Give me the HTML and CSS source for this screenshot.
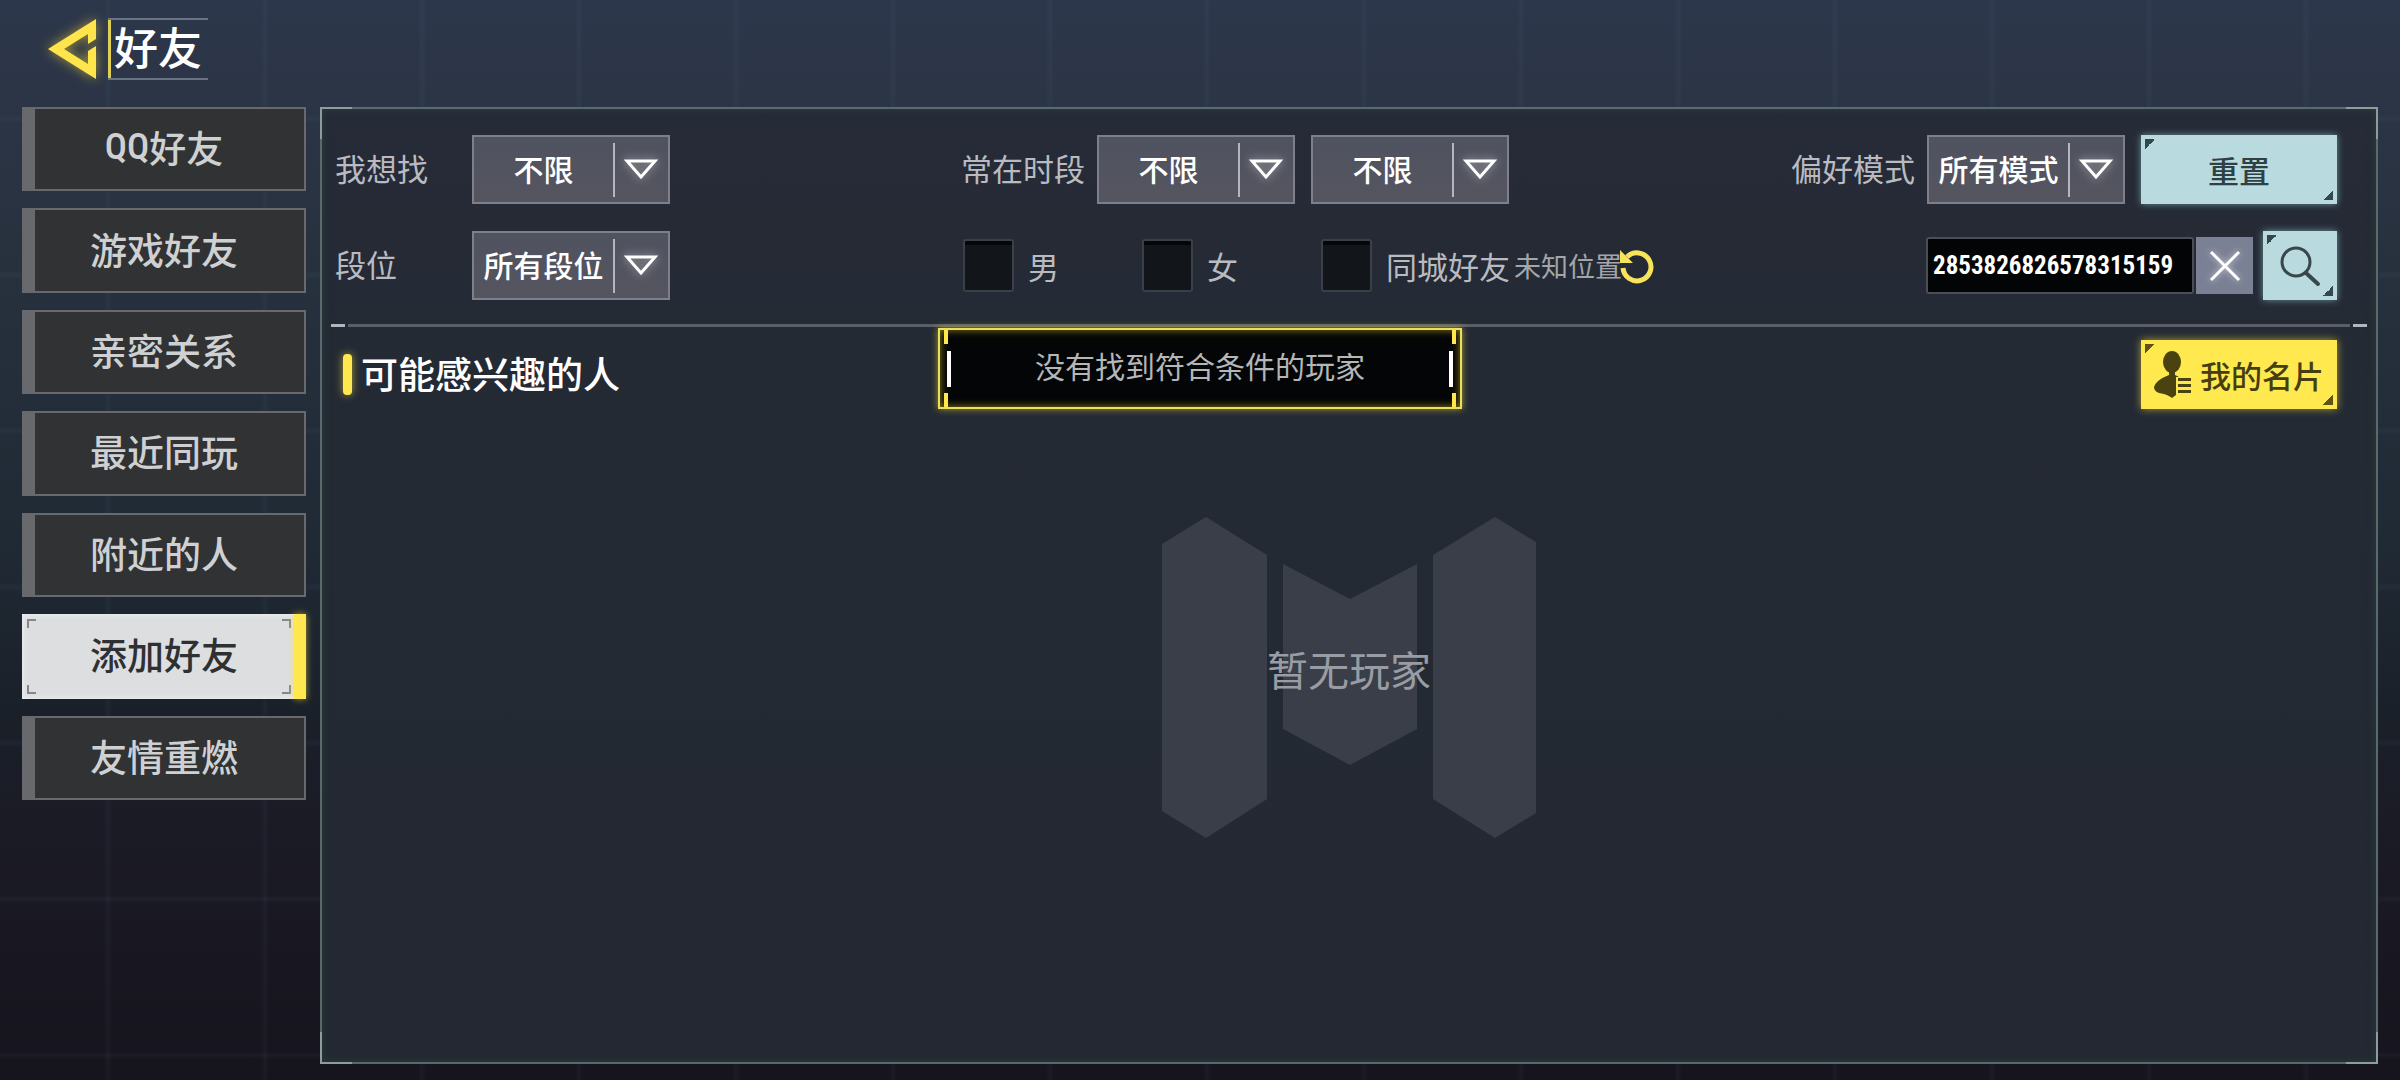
FILE: index.html
```html
<!DOCTYPE html>
<html lang="zh-CN">
<head>
    <meta charset="utf-8">
    <meta name="viewport" content="width=device-width, initial-scale=1">
    <title>好友</title>
    <link rel="stylesheet" href="styles.css">
</head>
<body>
    <header class="header">
        <button type="button" class="back" aria-label="返回">
            <svg width="50" height="62" viewBox="0 0 50 62">
                <path fill="#ffe44c" d="M0 31L48 1V21L40 26V16L16 31L40 46V33L48 28V61Z"/>
            </svg>
        </button>
        <h1>好友</h1>
    </header>

    <div class="layout">
        <nav class="sidebar">
            <a href="#qq"><span class="latin">QQ</span>好友</a>
            <a href="#game">游戏好友</a>
            <a href="#close">亲密关系</a>
            <a href="#recent">最近同玩</a>
            <a href="#nearby">附近的人</a>
            <a href="#add" class="active" aria-current="page"><i class="corners"></i>添加好友</a>
            <a href="#rekindle">友情重燃</a>
        </nav>

        <main class="panel">
            <form class="filters">
                <div class="field">
                    <label for="want" class="wide">我想找</label>
                    <div class="select">
                        <select id="want"><option>不限</option></select>
                        <svg width="36" height="24" viewBox="0 0 36 24"><path d="M4 3H32L18 19Z"/></svg>
                    </div>
                </div>
                <div class="field">
                    <label for="timeFrom">常在时段</label>
                    <div class="select">
                        <select id="timeFrom"><option>不限</option></select>
                        <svg width="36" height="24" viewBox="0 0 36 24"><path d="M4 3H32L18 19Z"/></svg>
                    </div>
                    <div class="select">
                        <select id="timeTo" aria-label="常在时段结束"><option>不限</option></select>
                        <svg width="36" height="24" viewBox="0 0 36 24"><path d="M4 3H32L18 19Z"/></svg>
                    </div>
                </div>
                <div class="field">
                    <label for="mode">偏好模式</label>
                    <div class="select">
                        <select id="mode"><option>所有模式</option></select>
                        <svg width="36" height="24" viewBox="0 0 36 24"><path d="M4 3H32L18 19Z"/></svg>
                    </div>
                    <button type="reset" class="btn">重置</button>
                </div>

                <div class="field">
                    <label for="rank" class="wide">段位</label>
                    <div class="select">
                        <select id="rank"><option>所有段位</option></select>
                        <svg width="36" height="24" viewBox="0 0 36 24"><path d="M4 3H32L18 19Z"/></svg>
                    </div>
                </div>
                <div class="checks">
                    <label><input type="checkbox" name="male">男</label>
                    <label><input type="checkbox" name="female">女</label>
                    <div class="city">
                        <label><input type="checkbox" name="city">同城好友</label>
                        <span class="place">未知位置</span>
                        <button type="button" class="refresh" aria-label="刷新位置">
                            <svg width="36" height="36" viewBox="0 0 36 36">
                                <path d="M7 9A14 14 0 1 1 3 20" fill="none" stroke="#f7e45a" stroke-width="5"/>
                                <path d="M0 2V15H13Z" fill="#f7e45a"/>
                            </svg>
                        </button>
                    </div>
                </div>
                <div class="search">
                    <input type="text" value="2853826826578315159" aria-label="玩家编号">
                    <button type="button" class="clear" aria-label="清除">
                        <svg width="32" height="32" viewBox="0 0 32 32"><path d="M2 2L30 30M30 2L2 30" stroke="#fff" stroke-width="3"/></svg>
                    </button>
                    <button type="submit" class="btn find" aria-label="搜索">
                        <svg width="42" height="42" viewBox="0 0 42 42" fill="none" stroke="#37474b" stroke-linecap="round">
                            <circle cx="17" cy="17" r="14" stroke-width="3"/>
                            <path d="M27 28L39 39" stroke-width="4"/>
                        </svg>
                    </button>
                </div>
            </form>

            <hr class="divider">

            <div class="section">
                <h2>可能感兴趣的人</h2>
                <button type="button" class="btn card">
                    <svg width="38" height="48" viewBox="0 0 38 48" fill="#4a4310">
                        <ellipse cx="18" cy="11" rx="9" ry="11"/>
                        <path d="M15 20H21V24L25 26H22V44L18 47Q13 43 5 42Q0 40 0 36Q2 29 15 24Z"/>
                        <path d="M24 27H37V30H24ZM24 33H37V36H24ZM24 39H37V42H24Z"/>
                    </svg>
                    我的名片
                </button>
            </div>

            <div class="empty">
                <svg width="374" height="321" viewBox="0 0 374 321" fill="#3a3e49">
                    <path d="M0 27L44 0L105 38V282L44 321L0 294Z"/>
                    <path d="M121 47L188 82L255 47V212L188 248L121 212Z"/>
                    <path d="M271 38L333 0L374 25V296L333 321L271 282Z"/>
                </svg>
                <p>暂无玩家</p>
            </div>
        </main>
    </div>

    <div class="toast" role="status">没有找到符合条件的玩家</div>
</body>
</html>
```

FILE: styles.css
```css
* {
    box-sizing: border-box;
}

body {
    margin: 0;
    min-height: 100vh;
    display: flex;
    flex-direction: column;
    position: relative;
    padding: 18px 22px 16px;
    font-family: "Noto Sans CJK SC", sans-serif;
    font-size: 31px;
    line-height: 40px;
    color: #b9bbc1;
    background:
        repeating-linear-gradient(90deg, transparent 0 104px, rgba(90, 120, 150, 0.08) 108px, transparent 112px 157px),
        repeating-linear-gradient(180deg, transparent 0 115px, rgba(90, 120, 150, 0.08) 119px, transparent 123px 156px),
        linear-gradient(180deg, #2d374b 0%, #28323f 22%, #202a35 50%, #1a2029 66%, #1b1b26 76%, #16141d 100%);
}

button, input, select {
    font: inherit;
    color: inherit;
    margin: 0;
    padding: 0;
    border: none;
    border-radius: 0;
    background: none;
}

button {
    cursor: pointer;
}

svg {
    display: block;
    flex: none;
}

/* Title bar */
.header {
    display: flex;
    gap: 10px;
    height: 62px;
    padding-left: 26px;
    margin-bottom: 27px;
}

.back svg {
    filter: drop-shadow(0 0 6px rgba(255, 220, 50, 0.6));
}

.header h1 {
    margin: 0;
    padding: 0 6px 0 6px;
    border: solid rgba(180, 190, 205, 0.45);
    border-width: 2px 0;
    box-shadow: inset 3px 0 #e0cf52;
    font-size: 44px;
    font-weight: 500;
    line-height: 52px;
    color: #fff;
}

.layout {
    flex: 1;
    display: flex;
    align-items: flex-start;
    gap: 14px;
}

/* Side menu */
.sidebar {
    display: grid;
    grid-auto-rows: 1fr;
    gap: 17px;
    width: 284px;
    height: 693px;
}

.sidebar a {
    position: relative;
    display: flex;
    align-items: center;
    justify-content: center;
    padding-bottom: 4px;
    font-size: 37px;
    font-weight: 500;
    color: #cfd0d2;
    text-decoration: none;
    background: linear-gradient(90deg, #67696c 11px, #303234 11px);
    border: 2px solid #67696c;
}

.sidebar .latin {
    font-family: "Liberation Sans Narrow", "Roboto Condensed", "Noto Sans CJK SC", sans-serif;
}

.sidebar .active {
    color: #2f3032;
    background: linear-gradient(270deg, #ffe84f 12px, #dddee0 12px);
    border: none;
    box-shadow: inset 0 0 6px #f2f5f6;
}

.sidebar .active::after {
    content: "";
    position: absolute;
    inset: 0 0 0 auto;
    width: 12px;
    background: #ffe84f;
    box-shadow: 0 0 7px rgba(255, 230, 70, 0.6);
}

.corners {
    position: absolute;
    inset: 5px 15px 5px 5px;
    --c: #85878a;
    background:
        linear-gradient(var(--c), var(--c)) 0 0 / 9px 2px,
        linear-gradient(var(--c), var(--c)) 0 0 / 2px 9px,
        linear-gradient(var(--c), var(--c)) 100% 0 / 9px 2px,
        linear-gradient(var(--c), var(--c)) 100% 0 / 2px 9px,
        linear-gradient(var(--c), var(--c)) 0 100% / 9px 2px,
        linear-gradient(var(--c), var(--c)) 0 100% / 2px 9px,
        linear-gradient(var(--c), var(--c)) 100% 100% / 9px 2px,
        linear-gradient(var(--c), var(--c)) 100% 100% / 2px 9px;
    background-repeat: no-repeat;
}

/* Main panel */
.panel {
    flex: 1;
    align-self: stretch;
    display: flex;
    flex-direction: column;
    --b: #b4bcc0;
    background:
        linear-gradient(var(--b), var(--b)) 0 0 / 32px 2px,
        linear-gradient(var(--b), var(--b)) 0 0 / 2px 32px,
        linear-gradient(var(--b), var(--b)) 100% 0 / 32px 2px,
        linear-gradient(var(--b), var(--b)) 100% 0 / 2px 32px,
        linear-gradient(var(--b), var(--b)) 0 100% / 32px 2px,
        linear-gradient(var(--b), var(--b)) 0 100% / 2px 32px,
        linear-gradient(var(--b), var(--b)) 100% 100% / 32px 2px,
        linear-gradient(var(--b), var(--b)) 100% 100% / 2px 32px,
        linear-gradient(#262b37, #242a34 30%, #232832);
    background-repeat: no-repeat;
    background-origin: border-box;
    border: 2px solid rgba(120, 140, 140, 0.65);
    box-shadow: inset 0 0 8px rgba(50, 90, 70, 0.4);
}

.filters {
    display: grid;
    grid-template-columns: 43fr 57fr auto;
    row-gap: 27px;
    padding: 26px 39px 24px 13px;
}

.field {
    display: flex;
    align-items: center;
    gap: 16px;
}

.field label {
    padding-bottom: 4px;
    white-space: nowrap;
}

.field label:not(.wide) {
    margin-right: -4px;
}

.field .wide {
    width: 121px;
}

.select {
    display: flex;
    align-items: center;
    position: relative;
    width: 198px;
    height: 69px;
    background: linear-gradient(#b4b6bd, #b4b6bd) 139px 50% / 2px 54px no-repeat, linear-gradient(#4f535f, #55555f);
    border: 2px solid #7d7f8a;
}

.select select {
    appearance: none;
    width: 100%;
    height: 100%;
    padding: 0 55px 4px 0;
    font-size: 30px;
    font-weight: 500;
    text-align: center;
    text-align-last: center;
    color: #fff;
    outline: none;
}

.select svg {
    position: absolute;
    right: 9px;
    fill: none;
    stroke: #fff;
    stroke-width: 3;
    filter: drop-shadow(0 0 5px rgba(255, 255, 255, 0.5));
    pointer-events: none;
}

.btn {
    --t: #33484b;
    display: flex;
    align-items: center;
    justify-content: center;
    width: 196px;
    height: 69px;
    font-weight: 500;
    color: #2f4044;
    background:
        linear-gradient(135deg, var(--t) 50%, transparent 50%) 4px 4px / 10px 10px,
        linear-gradient(315deg, var(--t) 50%, transparent 50%) calc(100% - 4px) calc(100% - 4px) / 10px 10px,
        #b9dade;
    background-repeat: no-repeat;
    box-shadow: 0 0 7px rgba(150, 215, 220, 0.6);
}

.checks {
    display: flex;
    align-items: center;
    gap: 83px;
    padding-left: 2px;
}

.checks label, .city {
    display: flex;
    align-items: center;
    white-space: nowrap;
}

.checks input {
    appearance: none;
    width: 51px;
    height: 53px;
    margin-right: 14px;
    border: 2px solid #3b3f48;
    border-radius: 3px;
    background: linear-gradient(#050608 4px, #121519 4px);
}

.place {
    margin-left: 4px;
    font-size: 27px;
    color: #a3a5a8;
}

.refresh {
    margin-left: -2px;
}

.search {
    display: flex;
    align-items: center;
    justify-content: flex-end;
}

.search input {
    width: 268px;
    height: 57px;
    padding-left: 5px;
    font-family: "Liberation Sans Narrow", "Roboto Condensed", sans-serif;
    font-size: 25px;
    font-weight: 700;
    color: #fff;
    background: #030405;
    border: 2px solid #4b4e55;
    border-radius: 3px;
}

.clear {
    display: flex;
    align-items: center;
    justify-content: center;
    width: 57px;
    height: 57px;
    margin: 0 10px 0 2px;
    background: #7b8194;
}

.clear svg {
    filter: drop-shadow(0 0 3px rgba(255, 255, 255, 0.6));
}

.find {
    width: 74px;
}

.divider {
    width: calc(100% - 18px);
    height: 3px;
    margin: 0 auto;
    border: none;
    background:
        linear-gradient(#b2b5bc, #b2b5bc) 0 0 / 14px 3px,
        linear-gradient(#b2b5bc, #b2b5bc) 100% 0 / 14px 3px,
        linear-gradient(#5a5e68, #5a5e68) 50% 0 / calc(100% - 34px) 3px;
    background-repeat: no-repeat;
}

.section {
    display: flex;
    align-items: center;
    justify-content: space-between;
    padding: 13px 39px 0 21px;
}

.section h2 {
    display: flex;
    align-items: center;
    gap: 9px;
    margin: 0;
    padding-bottom: 4px;
    font-size: 37px;
    font-weight: 500;
    color: #fff;
}

.section h2::before {
    content: "";
    width: 9px;
    height: 41px;
    margin-top: 4px;
    border-radius: 4px;
    background: #ffe84f;
    box-shadow: 0 0 8px rgba(255, 225, 50, 0.6);
}

.card {
    --t: #5d5415;
    gap: 8px;
    color: #453e10;
    background-color: #ffe94f;
    box-shadow: 0 0 8px rgba(255, 230, 70, 0.6);
}

.empty {
    display: grid;
    place-items: center;
    padding-top: 108px;
}

.empty > * {
    grid-area: 1 / 1;
}

.empty p {
    margin: 0;
    padding-bottom: 20px;
    font-size: 41px;
    color: #999ca3;
}

/* Message over the panel */
.toast {
    position: absolute;
    top: 328px;
    left: 50%;
    transform: translateX(-50%);
    width: 524px;
    height: 81px;
    text-align: center;
    font-size: 30px;
    line-height: 71px;
    color: #b5b6b8;
    background:
        linear-gradient(#fff, #fff) 7px 50% / 4px 36px,
        linear-gradient(#fff, #fff) calc(100% - 7px) 50% / 4px 36px,
        linear-gradient(#ffe84f, #ffe84f) 4px 0 / 4px 14px,
        linear-gradient(#ffe84f, #ffe84f) 4px 100% / 4px 14px,
        linear-gradient(#ffe84f, #ffe84f) calc(100% - 4px) 0 / 4px 14px,
        linear-gradient(#ffe84f, #ffe84f) calc(100% - 4px) 100% / 4px 14px,
        #040506;
    background-repeat: no-repeat;
    border: 2px solid #ece05a;
    box-shadow: 0 0 7px rgba(255, 230, 50, 0.6), inset 0 0 9px rgba(255, 230, 50, 0.55);
}
```
